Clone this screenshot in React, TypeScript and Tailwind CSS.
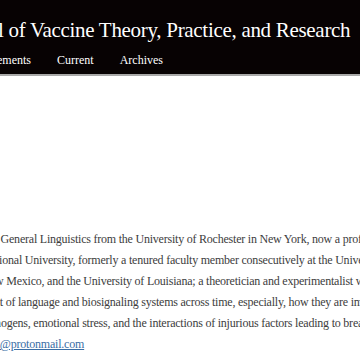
export default function App() {
  const lines = [
    { text: 'n General Linguistics from the University of Rochester in New York, now a professor', ml: '-ml-[8px]' },
    { text: 'tional University, formerly a tenured faculty member consecutively at the University', ml: '-ml-[4px]' },
    { text: 'w Mexico, and the University of Louisiana; a theoretician and experimentalist who', ml: '-ml-[5px]' },
    { text: 'nt of language and biosignaling systems across time, especially, how they are impaired', ml: '-ml-[6px]' },
    { text: 'thogens, emotional stress, and the interactions of injurious factors leading to breakdown', ml: '-ml-[8px]' },
  ]

  return (
    <div className="w-[360px] h-[363px] overflow-hidden bg-white" style={{ fontFamily: '"Liberation Serif", serif' }}>
      {/* Header */}
      <div className="bg-[#070203] h-[76px] border-b-2 border-[#a9a9a9] overflow-hidden">
        <div className="pt-[14px] -ml-[2px] whitespace-nowrap text-white text-[21px] tracking-[-0.3px] leading-[32px]">
          l of Vaccine Theory, Practice, and Research
        </div>
        <div className="flex gap-[26px] mt-[6px] -ml-[3px] whitespace-nowrap text-white text-[12px] leading-[16px]">
          <span>ements</span>
          <span>Current</span>
          <span>Archives</span>
        </div>
      </div>

      {/* Bio */}
      <div className="pt-[153px] overflow-hidden">
        {lines.map((l) => (
          <p key={l.text} className={`whitespace-nowrap text-[12px] tracking-[-0.22px] leading-[21px] text-[#3d3d3d] ${l.ml}`}>
            {l.text}
          </p>
        ))}
        <p className="whitespace-nowrap text-[12px] tracking-[-0.2px] leading-[21px] -ml-[6px]">
          <a href="#" className="text-[#3b6ea5] underline">n@protonmail.com</a>
        </p>
      </div>
    </div>
  )
}
